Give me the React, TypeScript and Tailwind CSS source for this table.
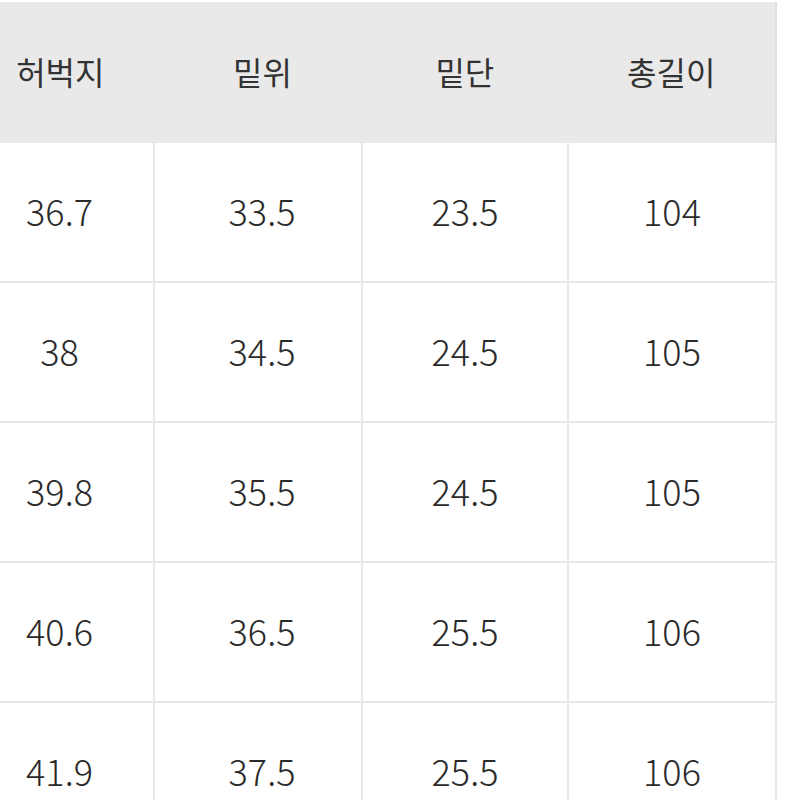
import React from "react";

const headers = ["허벅지", "밑위", "밑단", "총길이"];

const rows = [
  ["36.7", "33.5", "23.5", "104"],
  ["38", "34.5", "24.5", "105"],
  ["39.8", "35.5", "24.5", "105"],
  ["40.6", "36.5", "25.5", "106"],
  ["41.9", "37.5", "25.5", "106"],
];

const colClass = [
  "w-[155px] pr-[34px]",
  "w-[208px] pl-[8px]",
  "w-[206px]",
  "w-[208px]",
];

export default function App() {
  return (
    <div
      className="w-[800px] h-[800px] overflow-hidden bg-white pt-[2px] text-[#2a2a2a]"
      style={{ fontFamily: '"Noto Sans CJK KR", "Noto Sans", sans-serif' }}
    >
      <div className="flex h-[141px] w-[777px] bg-[#e9e9e9] border-r-2 border-[#dedede]">
        {headers.map((h, i) => (
          <div
            key={h}
            className={`${colClass[i]} flex items-center justify-center pb-[4px] text-[32px] font-normal text-[#333]`}
          >
            {h}
          </div>
        ))}
      </div>

      {rows.map((row, r) => (
        <div key={r} className="flex h-[140px]">
          {row.map((v, i) => (
            <div
              key={i}
              className={`${colClass[i]} flex items-center justify-center pb-[4px] border-r-2 border-b-2 border-[#e7e7e7] text-[36px] font-light`}
            >
              {v}
            </div>
          ))}
        </div>
      ))}
    </div>
  );
}
